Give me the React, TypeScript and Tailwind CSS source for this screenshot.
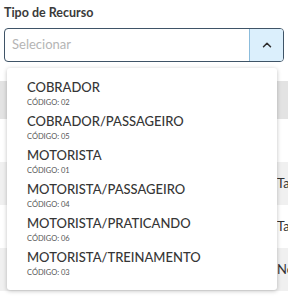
import { ChevronUp } from 'lucide-react';

const options = [
  { name: 'COBRADOR', code: '02' },
  { name: 'COBRADOR/PASSAGEIRO', code: '05' },
  { name: 'MOTORISTA', code: '01' },
  { name: 'MOTORISTA/PASSAGEIRO', code: '04' },
  { name: 'MOTORISTA/PRATICANDO', code: '06' },
  { name: 'MOTORISTA/TREINAMENTO', code: '03' },
];

const rows = [
  { text: '', bg: 'bg-white' },
  { text: 'Ta', bg: 'bg-[#f0f0f0]' },
  { text: 'Ta', bg: 'bg-white' },
  { text: 'No', bg: 'bg-[#f0f0f0]' },
  { text: '', bg: 'bg-white' },
];

export default function App() {
  return (
    <div
      className="relative h-[300px] w-[288px] overflow-hidden bg-white text-[#333]"
      style={{ fontFamily: 'Lato, "Open Sans", sans-serif' }}
    >
      <div className="px-[4px] pt-[5px]">
        <div className="text-[12.5px] font-bold leading-[16px] text-[#3a3a3a]">Tipo de Recurso</div>
        <div className="mt-[7px] flex h-[34px] overflow-hidden rounded-[4px] border border-[#3f5467]">
          <div className="flex flex-1 items-center pl-[7px] text-[13px] text-[#b5b5b5]">Selecionar</div>
          <div className="flex w-[34px] items-center justify-center border-l border-[#8bbcdc] bg-[#dbeffc]">
            <ChevronUp className="size-[14px] text-[#2f2f2f]" strokeWidth={2.6} />
          </div>
        </div>
      </div>

      <div className="mt-[19px]">
        <div className="h-[38px] bg-[#e3e3e3]" />
        {rows.map((r, i) => (
          <div key={i} className={`flex h-[43px] items-center pl-[277px] text-[13px] text-[#333] ${r.bg}`}>
            {r.text}
          </div>
        ))}
      </div>

      <div className="absolute left-[7px] top-[68px] w-[270px] rounded-[3px] bg-white px-[20px] py-[9px] shadow-[0_1px_4px_rgba(0,0,0,0.25)]">
        {options.map((o) => (
          <div key={o.code} className="pb-[3px] pt-[2px]">
            <div className="text-[13px] font-medium leading-[16px] text-[#363636]">{o.name}</div>
            <div className="mt-[3px] text-[7.5px] leading-[10px] text-[#555]">CÓDIGO: {o.code}</div>
          </div>
        ))}
      </div>
    </div>
  );
}
